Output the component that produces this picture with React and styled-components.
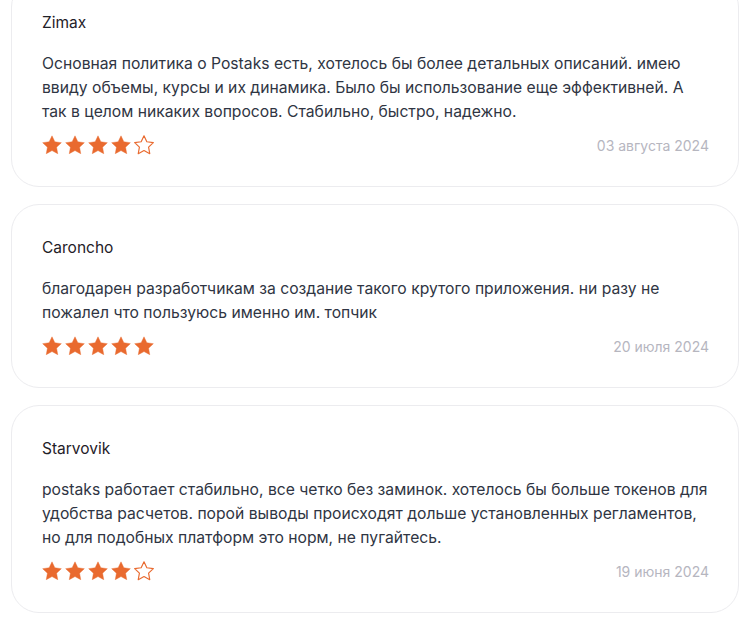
import styled, { createGlobalStyle } from "styled-components";

const GlobalStyle = createGlobalStyle`
  body {
    margin: 0;
    background: #fff;
    font-family: Inter, "Noto Sans", sans-serif;
    overflow: hidden;
  }
`;

const List = styled.div`
  display: flex;
  flex-direction: column;
  gap: 17px;
  margin-top: -21px;
  padding-left: 11px;
  width: 728px;
`;

const Card = styled.div`
  border: 1px solid #ececef;
  border-radius: 28px;
  padding: 33px 29px 31px 30px;
  background: #fff;
`;

const Name = styled.div`
  font-size: 15.5px;
  line-height: 20px;
  color: #1f2128;
`;

const Text = styled.p`
  margin: 19px -2px 0 0;
  font-size: 15.7px;
  line-height: 24px;
  color: #2f3543;
`;

const Footer = styled.div`
  display: flex;
  align-items: center;
  justify-content: space-between;
  margin-top: 11px;
`;

const Stars = styled.div`
  display: flex;
  gap: 3px;
`;

const DateLabel = styled.span`
  font-size: 14px;
  color: #b6b6bf;
`;

function Star({ filled }) {
  return (
    <svg width="20" height="20" viewBox="0 0 24 24">
      <path
        d="M12 1l3.4 7.1 7.8 1.1-5.7 5.4 1.4 7.8L12 18.7l-6.9 3.7 1.4-7.8-5.7-5.4 7.8-1.1z"
        fill={filled ? "#e96a2f" : "none"}
        stroke="#e96a2f"
        strokeWidth={filled ? 0.5 : 1.4}
        strokeLinejoin="round"
      />
    </svg>
  );
}

const reviews = [
  {
    name: "Zimax",
    text: "Основная политика о Postaks есть, хотелось бы более детальных описаний. имею ввиду объемы, курсы и их динамика. Было бы использование еще эффективней. А так в целом никаких вопросов. Стабильно, быстро, надежно.",
    rating: 4,
    date: "03 августа 2024",
  },
  {
    name: "Caroncho",
    text: "благодарен разработчикам за создание такого крутого приложения. ни разу не пожалел что пользуюсь именно им. топчик",
    rating: 5,
    date: "20 июля 2024",
  },
  {
    name: "Starvovik",
    text: "postaks работает стабильно, все четко без заминок. хотелось бы больше токенов для удобства расчетов. порой выводы происходят дольше установленных регламентов, но для подобных платформ это норм, не пугайтесь.",
    rating: 4,
    date: "19 июня 2024",
  },
];

export default function App() {
  return (
    <>
      <GlobalStyle />
      <List>
        {reviews.map((r) => (
          <Card key={r.name}>
            <Name>{r.name}</Name>
            <Text>{r.text}</Text>
            <Footer>
              <Stars>
                {[1, 2, 3, 4, 5].map((i) => (
                  <Star key={i} filled={i <= r.rating} />
                ))}
              </Stars>
              <DateLabel>{r.date}</DateLabel>
            </Footer>
          </Card>
        ))}
      </List>
    </>
  );
}
